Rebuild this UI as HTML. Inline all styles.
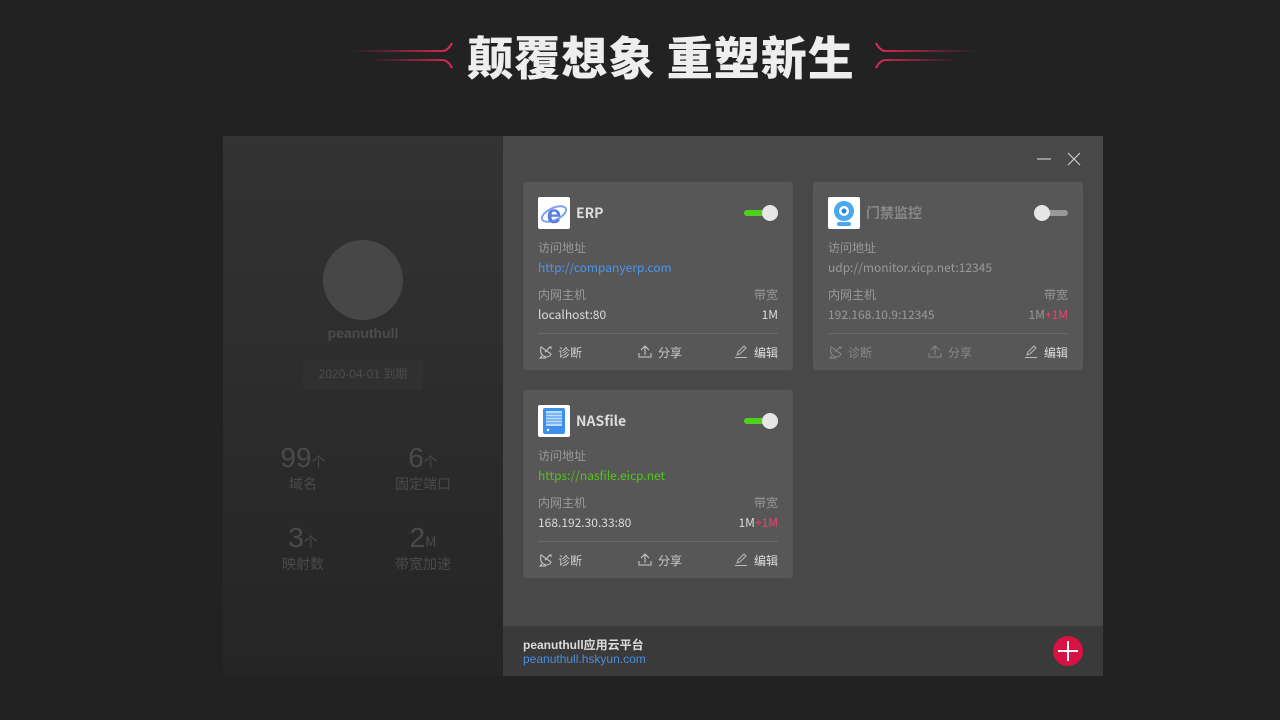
<!DOCTYPE html>
<html><head><meta charset="utf-8"><style>
*{margin:0;padding:0;box-sizing:border-box}
body{width:1280px;height:720px;background:#222223;position:relative;overflow:hidden;font-family:"Liberation Sans","Noto Sans CJK SC",sans-serif;}
.abs{position:absolute}
.title{left:21px;width:1280px;top:26px;text-align:center;font-size:46px;font-weight:900;color:#eee;letter-spacing:1px;line-height:60px;font-family:"Noto Sans CJK SC",sans-serif}
.win{left:223px;top:136px;width:880px;height:540px}
.left{left:0;top:0;width:280px;height:540px;background:linear-gradient(#333,#252525)}
.right{left:280px;top:0;width:600px;height:540px;background:#484848}
.foot{left:280px;top:490px;width:600px;height:50px;background:#3a3a3a}
.card{width:270px;height:188px;background:#575757;border-radius:4px}
.card .t{position:absolute;font-size:12px;line-height:16px;font-family:"Noto Sans CJK SC",sans-serif}
.card .t svg{vertical-align:-2px;margin-right:6px}
.ic{position:absolute;left:15px;top:15px;width:32px;height:32px;background:#fff;border-radius:2px}
.tg{position:absolute;left:221px;top:23px;width:34px;height:16px}
.hr{position:absolute;left:15px;right:15px;top:151px;height:1px;background:#6a6a6a}
.st{position:absolute;text-align:center;width:120px;color:#4a4a4a;font-family:"Noto Sans CJK SC",sans-serif}
.st b{font-size:28px;font-weight:400;font-family:"Liberation Sans",sans-serif;line-height:32px}
.st small{font-size:14px}
.st div{font-size:14px;margin-top:0px}
</style></head><body>
<svg class="abs" style="left:340px;top:38px" width="120" height="36">
<defs><linearGradient id="g" x1="0" x2="1"><stop offset="0" stop-color="#d0204f" stop-opacity="0"/><stop offset="1" stop-color="#e02a55"/></linearGradient></defs>
<path d="M10 13H102Q108 13 112 5" stroke="url(#g)" stroke-width="2" fill="none"/>
<path d="M30 22H102Q108 22 112 30" stroke="url(#g)" stroke-width="2" fill="none"/></svg>
<svg class="abs" style="left:868px;top:38px;transform:scaleX(-1)" width="120" height="36">
<path d="M10 13H102Q108 13 112 5" stroke="url(#g)" stroke-width="2" fill="none"/>
<path d="M30 22H102Q108 22 112 30" stroke="url(#g)" stroke-width="2" fill="none"/></svg>
<div class="abs title">颠覆想象 重塑新生</div>
<div class="abs win">
 <div class="abs left">
  <div class="abs" style="left:100px;top:104px;width:80px;height:80px;border-radius:50%;background:#474747"></div>
  <div class="abs" style="left:0;width:280px;top:189px;text-align:center;color:#4c4c4c;font-weight:700;font-size:14px">peanuthull</div>
  <div class="abs" style="left:80px;top:223px;width:120px;height:31px;background:#303030;border-radius:2px;color:#4c4c4c;font-size:12px;line-height:31px;text-align:center;font-family:'Liberation Sans','Noto Sans CJK SC',sans-serif">2020-04-01 到期</div>
  <div class="st" style="left:20px;top:306px"><b>99</b><small>个</small><div>域名</div></div>
  <div class="st" style="left:140px;top:306px"><b>6</b><small>个</small><div>固定端口</div></div>
  <div class="st" style="left:20px;top:386px"><b>3</b><small>个</small><div>映射数</div></div>
  <div class="st" style="left:140px;top:386px"><b>2</b><small>M</small><div>带宽加速</div></div>
 </div>
 <div class="abs right">
  <svg class="abs" style="left:532px;top:16px" width="50" height="14"><path d="M2 7H16" stroke="#ccc" stroke-width="1.2"/><path d="M33 1L45 13M45 1L33 13" stroke="#ccc" stroke-width="1.2"/></svg>
 </div>
 <div class="abs foot">
  <div class="abs" style="left:20px;top:10px;font-size:12px;font-weight:700;color:#ddd;font-family:'Liberation Sans','Noto Sans CJK SC',sans-serif">peanuthull应用云平台</div>
  <div class="abs" style="left:20px;top:26px;font-size:12px;color:#4a8fe0">peanuthull.hskyun.com</div>
  <svg class="abs" style="left:549px;top:10px" width="32" height="32"><circle cx="16" cy="15" r="15" fill="#d81244"/><path d="M16 5V25M6 15H26" stroke="#fff" stroke-width="2"/></svg>
 </div>
</div>

<svg width="0" height="0" style="position:absolute"><defs>
<g id="dish"><path d="M3 3Q1 11 8 13Q12 13 13 10Z" fill="none" stroke="currentColor" stroke-width="1"/><path d="M7 8L12 3M11 3h2v2" fill="none" stroke="currentColor" stroke-width="1"/><path d="M4 12L2 14H8" fill="none" stroke="currentColor" stroke-width="1"/></g>
<g id="up"><path d="M7 2V11M3 6L7 2L11 6M1 9V13H13V9" fill="none" stroke="currentColor" stroke-width="1"/></g>
<g id="pen"><path d="M3 11L4 8L10 2L12 4L6 10ZM1 13.5H13" fill="none" stroke="currentColor" stroke-width="1"/></g>
</defs></svg>

<!-- card 1 -->
<div class="abs card" style="left:523px;top:182px">
 <div class="ic"><svg width="32" height="32"><ellipse cx="16" cy="17" rx="13" ry="6" fill="none" stroke="#7da2ee" stroke-width="2" transform="rotate(-25 16 17)"/><text x="16" y="26" text-anchor="middle" font-size="26" font-weight="700" fill="#5b7ce6" font-family="Liberation Sans">e</text></svg></div>
 <div class="t" style="left:53px;top:23px;font-size:14px;font-weight:700;color:#ddd">ERP</div>
 <svg class="tg"><rect x="0" y="5" width="26" height="6" rx="3" fill="#4fd11b"/><circle cx="26" cy="8" r="8" fill="#e6e6e6"/></svg>
 <div class="t" style="left:15px;top:58px;color:#999">访问地址</div>
 <div class="t" style="left:15px;top:78px;color:#4a96ef">http://companyerp.com</div>
 <div class="t" style="left:15px;top:105px;color:#999">内网主机</div>
 <div class="t" style="right:15px;top:105px;color:#999">带宽</div>
 <div class="t" style="left:15px;top:125px;color:#ddd">localhost:80</div>
 <div class="t" style="right:15px;top:125px;color:#ddd">1M</div>
 <div class="hr"></div>
 <div class="t" style="left:15px;top:162px;color:#ccc"><svg width="14" height="15"><use href="#dish"/></svg>诊断</div>
 <div class="t" style="left:115px;top:162px;color:#ccc"><svg width="14" height="15"><use href="#up"/></svg>分享</div>
 <div class="t" style="right:15px;top:162px;color:#ddd"><svg width="14" height="15" style="color:#bbb"><use href="#pen"/></svg>编辑</div>
</div>
<!-- card 2 -->
<div class="abs card" style="left:813px;top:182px">
 <div class="ic"><svg width="32" height="32"><circle cx="16" cy="14" r="10" fill="#4aa8f0"/><circle cx="16" cy="14" r="5" fill="#fff"/><circle cx="16" cy="14" r="2.5" fill="#2f7fd9"/><rect x="9" y="25" width="14" height="4" rx="2" fill="#4aa8f0"/></svg></div>
 <div class="t" style="left:53px;top:23px;font-size:14px;font-weight:700;color:#888">门禁监控</div>
 <svg class="tg"><rect x="8" y="5" width="26" height="6" rx="3" fill="#999"/><circle cx="8" cy="8" r="8" fill="#e6e6e6"/></svg>
 <div class="t" style="left:15px;top:58px;color:#999">访问地址</div>
 <div class="t" style="left:15px;top:78px;color:#999">udp://monitor.xicp.net:12345</div>
 <div class="t" style="left:15px;top:105px;color:#999">内网主机</div>
 <div class="t" style="right:15px;top:105px;color:#999">带宽</div>
 <div class="t" style="left:15px;top:125px;color:#999">192.168.10.9:12345</div>
 <div class="t" style="right:15px;top:125px;color:#999">1M<span style="color:#ef3f6c">+1M</span></div>
 <div class="hr"></div>
 <div class="t" style="left:15px;top:162px;color:#888"><svg width="14" height="15"><use href="#dish"/></svg>诊断</div>
 <div class="t" style="left:115px;top:162px;color:#888"><svg width="14" height="15"><use href="#up"/></svg>分享</div>
 <div class="t" style="right:15px;top:162px;color:#ddd"><svg width="14" height="15" style="color:#bbb"><use href="#pen"/></svg>编辑</div>
</div>
<!-- card 3 -->
<div class="abs card" style="left:523px;top:390px">
 <div class="ic"><svg width="32" height="32"><rect x="5" y="3" width="22" height="26" rx="2" fill="#3d8ff0"/><rect x="8" y="6" width="16" height="15" fill="#b9dcff"/><path d="M8 9H24M8 12H24M8 15H24M8 18H24" stroke="#3d8ff0"/><circle cx="10" cy="25" r="1.2" fill="#fff"/></svg></div>
 <div class="t" style="left:53px;top:23px;font-size:14px;font-weight:700;color:#ddd">NASfile</div>
 <svg class="tg"><rect x="0" y="5" width="26" height="6" rx="3" fill="#4fd11b"/><circle cx="26" cy="8" r="8" fill="#e6e6e6"/></svg>
 <div class="t" style="left:15px;top:58px;color:#999">访问地址</div>
 <div class="t" style="left:15px;top:78px;color:#52c41a">https://nasfile.eicp.net</div>
 <div class="t" style="left:15px;top:105px;color:#999">内网主机</div>
 <div class="t" style="right:15px;top:105px;color:#999">带宽</div>
 <div class="t" style="left:15px;top:125px;color:#ddd">168.192.30.33:80</div>
 <div class="t" style="right:15px;top:125px;color:#ddd">1M<span style="color:#ef3f6c">+1M</span></div>
 <div class="hr"></div>
 <div class="t" style="left:15px;top:162px;color:#ccc"><svg width="14" height="15"><use href="#dish"/></svg>诊断</div>
 <div class="t" style="left:115px;top:162px;color:#ccc"><svg width="14" height="15"><use href="#up"/></svg>分享</div>
 <div class="t" style="right:15px;top:162px;color:#ddd"><svg width="14" height="15" style="color:#bbb"><use href="#pen"/></svg>编辑</div>
</div>
</body></html>
